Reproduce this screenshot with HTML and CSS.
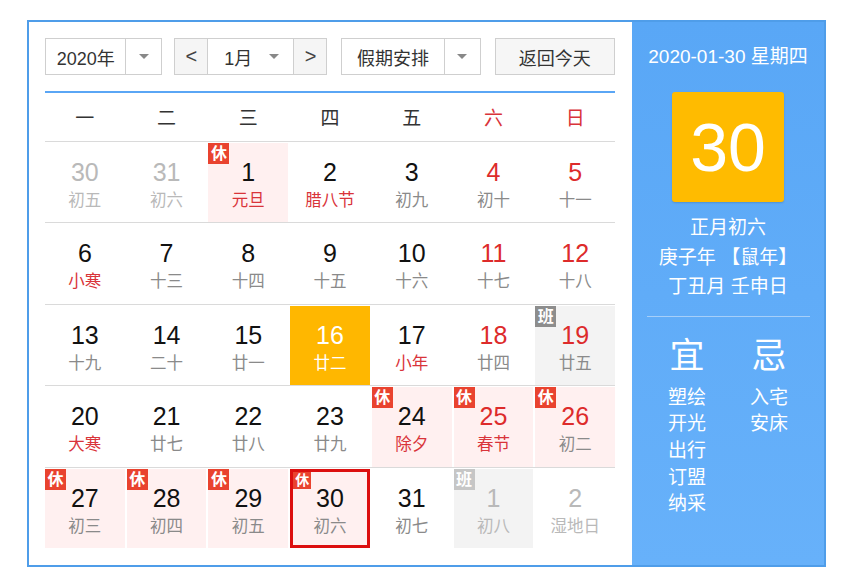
FILE: index.html
```html
<!DOCTYPE html>
<html lang="zh-CN">
<head>
<meta charset="utf-8">
<title>万年历</title>
<link rel="stylesheet" href="styles.css">
</head>
<body>
<div class="frame">
  <div class="main">
    <div class="toolbar">
      <div class="select year">
        <span class="sel-text">2020年</span>
        <span class="sel-arrow"><i class="tri"></i></span>
      </div>
      <div class="month-group">
        <span class="nav">&lt;</span>
        <span class="month"><span class="sel-text">1月</span><i class="tri"></i></span>
        <span class="nav">&gt;</span>
      </div>
      <div class="select holiday">
        <span class="sel-text">假期安排</span>
        <span class="sel-arrow"><i class="tri"></i></span>
      </div>
      <div class="btn">返回今天</div>
    </div>
    <div class="weekhead">
      <span>一</span><span>二</span><span>三</span><span>四</span><span>五</span><span class="red">六</span><span class="red">日</span>
    </div>
    <div class="row">
      <div class="cell other"><b>30</b><em>初五</em></div>
      <div class="cell other"><b>31</b><em>初六</em></div>
      <div class="cell rest"><i class="badge">休</i><b>1</b><em class="red">元旦</em></div>
      <div class="cell"><b>2</b><em class="red">腊八节</em></div>
      <div class="cell"><b>3</b><em>初九</em></div>
      <div class="cell wk"><b>4</b><em>初十</em></div>
      <div class="cell wk"><b>5</b><em>十一</em></div>
    </div>
    <div class="row">
      <div class="cell"><b>6</b><em class="red">小寒</em></div>
      <div class="cell"><b>7</b><em>十三</em></div>
      <div class="cell"><b>8</b><em>十四</em></div>
      <div class="cell"><b>9</b><em>十五</em></div>
      <div class="cell"><b>10</b><em>十六</em></div>
      <div class="cell wk"><b>11</b><em>十七</em></div>
      <div class="cell wk"><b>12</b><em>十八</em></div>
    </div>
    <div class="row">
      <div class="cell"><b>13</b><em>十九</em></div>
      <div class="cell"><b>14</b><em>二十</em></div>
      <div class="cell"><b>15</b><em>廿一</em></div>
      <div class="cell today"><b>16</b><em>廿二</em></div>
      <div class="cell"><b>17</b><em class="red">小年</em></div>
      <div class="cell wk"><b>18</b><em>廿四</em></div>
      <div class="cell wk work"><i class="badge ban">班</i><b>19</b><em>廿五</em></div>
    </div>
    <div class="row">
      <div class="cell"><b>20</b><em class="red">大寒</em></div>
      <div class="cell"><b>21</b><em>廿七</em></div>
      <div class="cell"><b>22</b><em>廿八</em></div>
      <div class="cell"><b>23</b><em>廿九</em></div>
      <div class="cell rest"><i class="badge">休</i><b>24</b><em class="red">除夕</em></div>
      <div class="cell rest wk"><i class="badge">休</i><b>25</b><em class="red">春节</em></div>
      <div class="cell rest wk"><i class="badge">休</i><b>26</b><em>初二</em></div>
    </div>
    <div class="row">
      <div class="cell rest"><i class="badge">休</i><b>27</b><em>初三</em></div>
      <div class="cell rest"><i class="badge">休</i><b>28</b><em>初四</em></div>
      <div class="cell rest"><i class="badge">休</i><b>29</b><em>初五</em></div>
      <div class="cell rest selected"><i class="badge">休</i><b>30</b><em>初六</em></div>
      <div class="cell"><b>31</b><em>初七</em></div>
      <div class="cell other work"><i class="badge ban light">班</i><b>1</b><em>初八</em></div>
      <div class="cell other"><b>2</b><em>湿地日</em></div>
    </div>
  </div>
  <div class="side">
    <div class="side-date">2020-01-30 星期四</div>
    <div class="bigday">30</div>
    <div class="lunar-lines">
      <div>正月初六</div>
      <div>庚子年 【鼠年】</div>
      <div>丁丑月 壬申日</div>
    </div>
    <div class="sep"></div>
    <div class="yiji">
      <div class="col">
        <div class="yj-title">宜</div>
        <div>塑绘</div><div>开光</div><div>出行</div><div>订盟</div><div>纳采</div>
      </div>
      <div class="col">
        <div class="yj-title">忌</div>
        <div>入宅</div><div>安床</div>
      </div>
    </div>
  </div>
</div>
</body>
</html>
```
FILE: styles.css
```css
html, body {
  margin: 0;
  padding: 0;
  background: #ffffff;
}
body {
  font-family: "Liberation Sans", "Noto Sans CJK SC", sans-serif;
  color: #333;
}
.frame {
  margin: 20px 0 0 27px;
  width: 799px;
  height: 547px;
  box-sizing: border-box;
  border: 2px solid #4f9de9;
  display: flex;
}
.main {
  width: 603px;
  box-sizing: border-box;
  padding: 16px 17px 17px 16px;
}
.toolbar {
  height: 37px;
  display: flex;
  align-items: stretch;
  margin-bottom: 16px;
}
.select, .month-group, .btn {
  box-sizing: border-box;
  border: 1px solid #cfcfcf;
  display: flex;
  align-items: center;
  font-size: 18px;
  color: #333;
  background: #fff;
}
.year { width: 118px; }
.holiday { width: 140px; margin-left: 14px; }
.month-group { width: 154px; margin-left: 12px; }
.btn {
  width: 121px;
  margin-left: 14px;
  justify-content: center;
  background: #f6f6f6;
}
.sel-text {
  flex: 1;
  text-align: center;
}
.sel-arrow {
  width: 35px;
  height: 100%;
  border-left: 1px solid #cfcfcf;
  display: flex;
  align-items: center;
  justify-content: center;
}
.tri {
  width: 0;
  height: 0;
  border-left: 5px solid transparent;
  border-right: 5px solid transparent;
  border-top: 5px solid #888;
}
.nav {
  width: 32px;
  height: 100%;
  display: flex;
  align-items: center;
  justify-content: center;
  background: #f5f5f5;
  color: #444;
  font-size: 20px;
}
.month {
  flex: 1;
  height: 100%;
  display: flex;
  align-items: center;
  padding-right: 14px;
  border-left: 1px solid #cfcfcf;
  border-right: 1px solid #cfcfcf;
  background: #fff;
}
.month .sel-text {
  text-align: left;
  padding-left: 16px;
}
.weekhead {
  border-top: 2px solid #5aa6f5;
  display: grid;
  grid-template-columns: repeat(7, 1fr);
  column-gap: 2px;
  align-items: center;
  font-size: 19px;
  color: #333;
  text-align: center;
  padding-bottom: 2px;
  height: 46px;
}
.red { color: #d9343a; }
.row {
  height: 81.4px;
  box-sizing: border-box;
  border-top: 1px solid #dadada;
  padding-top: 1px;
  display: grid;
  grid-template-columns: repeat(7, 1fr);
  column-gap: 2px;
}
.cell {
  position: relative;
  display: flex;
  flex-direction: column;
  align-items: center;
  box-sizing: border-box;
  padding-top: 14px;
}
.cell b {
  font-weight: normal;
  font-size: 25px;
  line-height: 30px;
  color: #111;
}
.cell em {
  font-style: normal;
  font-size: 16.5px;
  line-height: 26px;
  color: #8a8a8a;
}
.cell em.red { color: #d9343a; }
.cell.wk b { color: #dd2b2b; }
.cell.other b, .cell.other em { color: #b9b9b9; }
.cell.rest { background: #fff0f0; }
.cell.work { background: #f3f3f3; }
.cell.today { background: #ffb700; }
.cell.today b, .cell.today em { color: #fff; }
.cell.selected {
  border: 3px solid #dc0f0f;
  padding-top: 11px;
}
.badge {
  position: absolute;
  left: 0;
  top: 0;
  width: 21px;
  height: 21px;
  line-height: 21px;
  text-align: center;
  font-style: normal;
  font-size: 16px;
  font-weight: bold;
  color: #fff;
  background: #e9432f;
}
.badge.ban { background: #8d8d8d; }
.badge.ban.light { background: #c6c6c6; }
.selected .badge {
  width: 18px;
  height: 17px;
  line-height: 17px;
  font-size: 14px;
}
.side {
  flex: 1;
  background: linear-gradient(#59a7f6, #67b1fa);
  color: #fff;
  display: flex;
  flex-direction: column;
  align-items: center;
}
.side-date {
  margin-top: 22px;
  font-size: 19px;
  line-height: 26px;
}
.bigday {
  margin-top: 22px;
  width: 112px;
  height: 110px;
  background: #ffbb00;
  border-radius: 3px;
  box-shadow: 0 1px 2px rgba(0,0,0,0.15);
  font-family: "Liberation Sans", sans-serif;
  font-size: 68px;
  line-height: 110px;
  text-align: center;
  color: #fff;
}
.lunar-lines {
  margin-top: 11px;
  font-size: 19px;
  line-height: 29.5px;
  text-align: center;
}
.sep {
  margin-top: 14px;
  width: 163px;
  height: 1px;
  background: #a6cff9;
}
.yiji {
  display: flex;
  margin-top: 19px;
}
.col {
  width: 82px;
  display: flex;
  flex-direction: column;
  align-items: center;
  font-size: 19px;
  line-height: 26.7px;
}
.yj-title {
  font-size: 35px;
  line-height: 40px;
  margin-bottom: 9px;
}
```
